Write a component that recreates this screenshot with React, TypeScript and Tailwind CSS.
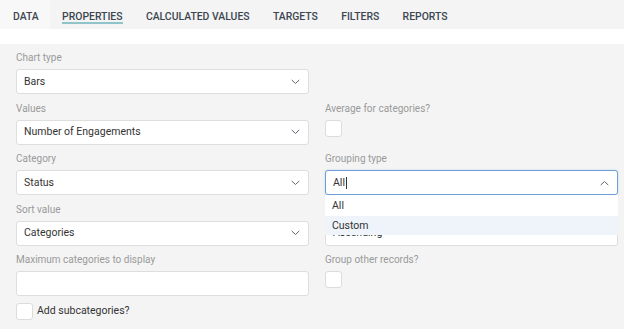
import React from "react";

const Chevron = ({ up = false }: { up?: boolean }) => (
  <svg width="9" height="6" viewBox="0 0 9 6" className="absolute right-[8px] top-1/2 -translate-y-1/2">
    <path
      d={up ? "M1 4.8 L4.5 1.5 L8 4.8" : "M1 1.2 L4.5 4.5 L8 1.2"}
      fill="none"
      stroke="#5f6670"
      strokeWidth="1"
      strokeLinecap="round"
      strokeLinejoin="round"
    />
  </svg>
);

const Label = ({ children }: { children: React.ReactNode }) => (
  <div className="h-[16px] leading-[16px] text-[10px] text-[#9a9a9a] mb-[3px]">{children}</div>
);

const Select = ({ value }: { value: string }) => (
  <div className="relative h-[25px] bg-white border border-[#dedede] rounded-[3px] pl-[7px] flex items-center text-[10.5px] text-[#333]">
    {value}
    <Chevron />
  </div>
);

const Checkbox = () => (
  <div className="w-[17px] h-[17px] bg-white border border-[#dcdcdc] rounded-[3px]" />
);

const Field = ({ children }: { children: React.ReactNode }) => (
  <div className="h-[44px] mb-[6.5px]">{children}</div>
);

export default function App() {
  const tabs = ["DATA", "PROPERTIES", "CALCULATED VALUES", "TARGETS", "FILTERS", "REPORTS"];
  return (
    <div className="w-[624px] h-[329px] overflow-hidden bg-[#f4f4f4]" style={{ fontFamily: "Roboto, 'Noto Sans', sans-serif" }}>
      <div className="h-[29px] flex bg-[#f4f4f4]">
        {tabs.map((t, i) => (
          <div
            key={t}
            className={
              "h-[29px] flex items-start pt-[8.5px] text-[10.4px] font-medium text-[#3b4650] " +
              (i === 0 ? "bg-[#f8f8f8] pl-[13px] pr-[11.7px]" : "px-[11.7px]")
            }
          >
            <span className="relative">
              {t}
              {i === 1 && <span className="absolute left-0 right-0 top-[13.5px] h-[2px] bg-[#8fc4ca]" />}
            </span>
          </div>
        ))}
      </div>
      <div className="h-[15px] bg-white" />
      <div className="pt-[6px] pl-[16px] grid grid-cols-[293px_293px] gap-x-[16px]">
        <div>
          <Field>
            <Label>Chart type</Label>
            <Select value="Bars" />
          </Field>
          <Field>
            <Label>Values</Label>
            <Select value="Number of Engagements" />
          </Field>
          <Field>
            <Label>Category</Label>
            <Select value="Status" />
          </Field>
          <Field>
            <Label>Sort value</Label>
            <Select value="Categories" />
          </Field>
          <Field>
            <Label>Maximum categories to display</Label>
            <div className="h-[25px] bg-white border border-[#dedede] rounded-[3px]" />
          </Field>
          <div className="flex items-center gap-[4px] mt-[2px]">
            <Checkbox />
            <span className="text-[10.5px] text-[#333]">Add subcategories?</span>
          </div>
        </div>
        <div>
          <Field>
            <div />
          </Field>
          <Field>
            <Label>Average for categories?</Label>
            <Checkbox />
          </Field>
          <Field>
            <Label>Grouping type</Label>
            <div className="relative z-10">
              <div className="relative h-[25px] bg-white border border-[#6f9fd4] rounded-[3px] pl-[7px] flex items-center text-[10.5px] text-[#333] shadow-[0_0_2px_rgba(80,140,210,0.35)]">
                All
                <span className="inline-block w-[1px] h-[12px] bg-[#333] ml-[1px]" />
                <Chevron up />
              </div>
              <div className="absolute left-0 right-0 top-[25px] pt-[1px] bg-white text-[10.5px] text-[#333]">
                <div className="h-[20px] leading-[20px] pl-[7px]">All</div>
                <div className="h-[19px] leading-[19px] pl-[7px] bg-[#eef4fa]">Custom</div>
              </div>
            </div>
          </Field>
          <Field>
            <Label>&nbsp;</Label>
            <Select value="Ascending" />
          </Field>
          <Field>
            <Label>Group other records?</Label>
            <Checkbox />
          </Field>
        </div>
      </div>
    </div>
  );
}
